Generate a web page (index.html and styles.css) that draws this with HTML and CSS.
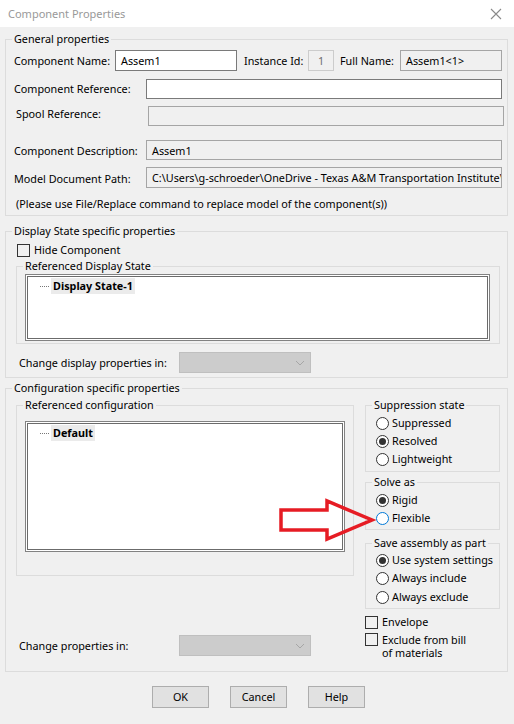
FILE: index.html
```html
<!DOCTYPE html>
<html lang="en">
<head>
    <meta charset="UTF-8">
    <title>Component Properties</title>
    <link rel="stylesheet" href="styles.css">
</head>
<body>
    <div class="titlebar">
        <span class="title">Component Properties</span>
        <svg class="close" width="12" height="12" viewBox="0 0 12 12"><path d="M1 1L11 11M11 1L1 11" stroke="#8a8a8a" stroke-width="1.1" fill="none"/></svg>
    </div>

    <div class="dialog">
        <fieldset class="group general">
            <legend>General properties</legend>
            <div class="row row-name">
                <label class="lbl-name">Component Name:</label>
                <div class="box edit w-name">Assem1</div>
                <label class="lbl-inst">Instance Id:</label>
                <div class="box faint w-inst">1</div>
                <label class="lbl-full">Full Name:</label>
                <div class="box readonly w-full">Assem1&lt;1&gt;</div>
            </div>
            <div class="row row-ref">
                <label class="lbl-wide">Component Reference:</label>
                <div class="box edit w-long"></div>
            </div>
            <div class="row row-spool">
                <label class="lbl-wide">Spool Reference:</label>
                <div class="box readonly w-long"></div>
            </div>
            <div class="row row-desc">
                <label class="lbl-wide">Component Description:</label>
                <div class="box readonly w-long">Assem1</div>
            </div>
            <div class="row row-path">
                <label class="lbl-wide">Model Document Path:</label>
                <div class="box readonly w-long">C:\Users\g-schroeder\OneDrive - Texas A&amp;M Transportation Institute\Assem1.SLDASM</div>
            </div>
            <p class="note">(Please use File/Replace command to replace model of the component(s))</p>
        </fieldset>

        <fieldset class="group display">
            <legend>Display State specific properties</legend>
            <div class="check hide-comp"><span class="cb"></span>Hide Component</div>
            <fieldset class="group sub sub-display">
                <legend>Referenced Display State</legend>
                <div class="listbox list-display">
                    <div class="tree-item"><span class="dots"></span><span class="item-text">Display State-1</span></div>
                </div>
            </fieldset>
            <div class="row combo-row combo-display">
                <label>Change display properties in:</label>
                <div class="combo"><svg width="10" height="6" viewBox="0 0 10 6"><path d="M1 1L5 5L9 1" stroke="#a6a6a6" fill="none"/></svg></div>
            </div>
        </fieldset>

        <fieldset class="group config">
            <legend>Configuration specific properties</legend>
            <div class="config-cols">
                <div class="config-left">
                    <fieldset class="group sub sub-config">
                        <legend>Referenced configuration</legend>
                        <div class="listbox list-config">
                            <div class="tree-item"><span class="dots"></span><span class="item-text">Default</span></div>
                        </div>
                    </fieldset>
                    <div class="row combo-row combo-config">
                        <label>Change properties in:</label>
                        <div class="combo"><svg width="10" height="6" viewBox="0 0 10 6"><path d="M1 1L5 5L9 1" stroke="#a6a6a6" fill="none"/></svg></div>
                    </div>
                </div>
                <div class="config-right">
                    <fieldset class="group opt suppress">
                        <legend>Suppression state</legend>
                        <div class="radio"><span class="rb"></span>Suppressed</div>
                        <div class="radio"><span class="rb on"></span>Resolved</div>
                        <div class="radio"><span class="rb"></span>Lightweight</div>
                    </fieldset>
                    <fieldset class="group opt solve">
                        <legend>Solve as</legend>
                        <div class="radio"><span class="rb on"></span>Rigid</div>
                        <div class="radio"><span class="rb hover"></span>Flexible</div>
                    </fieldset>
                    <fieldset class="group opt save">
                        <legend>Save assembly as part</legend>
                        <div class="radio"><span class="rb on"></span>Use system settings</div>
                        <div class="radio"><span class="rb"></span>Always include</div>
                        <div class="radio last"><span class="rb"></span>Always exclude</div>
                    </fieldset>
                    <div class="check envelope"><span class="cb"></span>Envelope</div>
                    <div class="check exclude"><span class="cb"></span><span>Exclude from bill<br>of materials</span></div>
                </div>
            </div>
        </fieldset>

        <div class="buttons">
            <button>OK</button>
            <button>Cancel</button>
            <button>Help</button>
        </div>

        <svg class="callout" width="102" height="50" viewBox="0 0 102 50">
            <polygon points="4,15 50,15 50,6 95,25 50,44 50,35 4,35" fill="none" stroke="#e61c24" stroke-width="3.5"/>
        </svg>
    </div>
</body>
</html>
```

FILE: styles.css
```css
* {
    box-sizing: border-box;
}
body {
    margin: 0;
    width: 514px;
    height: 724px;
    background-color: #f0f0f0;
    font-family: "Noto Sans", "Open Sans", sans-serif;
    font-size: 10.8px;
    line-height: 16px;
    color: #000;
    overflow: hidden;
    white-space: nowrap;
}
.titlebar {
    display: flex;
    align-items: center;
    justify-content: space-between;
    height: 27px;
    padding: 0 12px 0 8px;
    background-color: #fff;
}
.title {
    color: #999;
    font-size: 11px;
}
.dialog {
    position: relative;
    padding: 4px 6px 0 5px;
}

/* group boxes */
.group {
    margin: 0;
    min-width: 0;
    border: 1px solid #dcdcdc;
    padding: 0 5px 0 8px;
}
.group legend {
    margin-left: -2px;
    padding: 0 2px;
    line-height: 16px;
}
.general {
    padding-top: 3px;
    padding-bottom: 3px;
}
.row {
    display: flex;
    align-items: center;
}
.row label {
    flex: none;
}
.box {
    height: 21px;
    padding: 0 5px;
    line-height: 19px;
    overflow: hidden;
    border: 1px solid #7a7a7a;
}
.edit {
    background-color: #fff;
}
.readonly {
    background-color: #f0f0f0;
    border-color: #a5a5a5;
}
.faint {
    background-color: #f0f0f0;
    border-color: #cccccc;
    color: #6d6d6d;
    text-align: center;
}
.lbl-name { width: 101px; }
.w-name { width: 122px; }
.lbl-inst { width: 64px; margin-left: 7px; }
.w-inst { width: 26px; }
.lbl-full { width: 60px; margin-left: 6px; }
.w-full { width: 102px; }
.lbl-wide { width: 132px; }
.w-long { width: 356px; }
.row-ref { margin-top: 8px; }
.row-ref .box { height: 20px; }
.row-spool { margin-top: 7px; margin-right: -2px; align-items: flex-start; }
.row-spool label { margin-left: 2px; width: 132px; }
.row-spool .box { height: 20px; }
.row-desc { margin-top: 14px; }
.row-desc label { padding-top: 2px; }
.row-desc .box { height: 20px; }
.row-path { margin-top: 7px; }
.row-path label { padding-top: 2px; }
.note {
    margin: 8px 0 0 2px;
}

/* checkboxes and radios */
.check {
    display: flex;
    align-items: center;
}
.cb {
    flex: none;
    width: 13px;
    height: 13px;
    margin-right: 4px;
    border: 1px solid #333;
}
.radio {
    display: flex;
    align-items: center;
    height: 18px;
    padding-left: 2px;
}
.rb {
    flex: none;
    width: 13px;
    height: 13px;
    margin-right: 3px;
    border: 1px solid #333;
    border-radius: 50%;
    background-color: #fff;
    position: relative;
}
.rb.on::after {
    content: "";
    position: absolute;
    left: 2px;
    top: 2px;
    width: 7px;
    height: 7px;
    border-radius: 50%;
    background-color: #333;
}
.rb.hover {
    border-color: #0078d7;
}

/* display state */
.display {
    margin-top: 7px;
    padding-bottom: 4px;
}
.hide-comp {
    margin-top: 3px;
    padding-left: 3px;
}
.sub {
    margin: 0 2px;
    padding: 0 9px 2px 8px;
}
.listbox {
    background-color: #fff;
    border: 1px solid #828282;
    box-shadow: inset 0 0 0 1px #fff, inset 0 0 0 2px #6b6b6b;
    padding: 3px 0 0 14px;
}
.list-display {
    height: 67px;
}
.tree-item {
    display: flex;
    align-items: center;
}
.dots {
    width: 9px;
    height: 1px;
    margin-right: 2px;
    border-top: 1px dotted #777;
}
.item-text {
    padding: 0 2px;
    font-weight: bold;
    background-color: #ebebeb;
}
.combo-row {
    padding-left: 5px;
}
.combo-row label {
    width: 160px;
}
.combo {
    display: flex;
    align-items: center;
    justify-content: flex-end;
    width: 132px;
    height: 21px;
    padding-right: 5px;
    background-color: #cccccc;
    border: 1px solid #bfbfbf;
}
.combo-display {
    margin-top: 8px;
}

/* configuration */
.config {
    margin-top: 2px;
    padding-bottom: 12px;
}
.config-cols {
    display: flex;
}
.config-left {
    display: flex;
    flex-direction: column;
    width: 351px;
}
.sub-config {
    width: 338px;
    margin-top: 1px;
    padding-top: 8px;
    padding-bottom: 23px;
}
.list-config {
    width: 320px;
    height: 131px;
}
.combo-config {
    margin-top: auto;
    margin-bottom: 3px;
}
.config-right {
    width: 135px;
}
.opt {
    margin: 1px 0 0 0;
    padding: 1px 4px 3px 8px;
}
.solve {
    margin-top: 2px;
    padding-top: 1px;
    padding-bottom: 2px;
}
.save {
    margin-top: 5px;
    padding-top: 0;
    padding-bottom: 2px;
}
.radio.last {
    height: 19px;
    padding-top: 1px;
}
.envelope {
    margin-top: 5px;
}
.exclude {
    margin-top: 3px;
    align-items: flex-start;
    line-height: 13px;
}

/* buttons */
.buttons {
    display: flex;
    gap: 21px;
    margin-top: 14px;
    padding-left: 147px;
}
.buttons button {
    width: 57px;
    height: 22px;
    padding: 0;
    font: inherit;
    color: #000;
    background-color: #e1e1e1;
    border: 1px solid #adadad;
}

.callout {
    position: absolute;
    left: 277px;
    top: 468px;
}
```
